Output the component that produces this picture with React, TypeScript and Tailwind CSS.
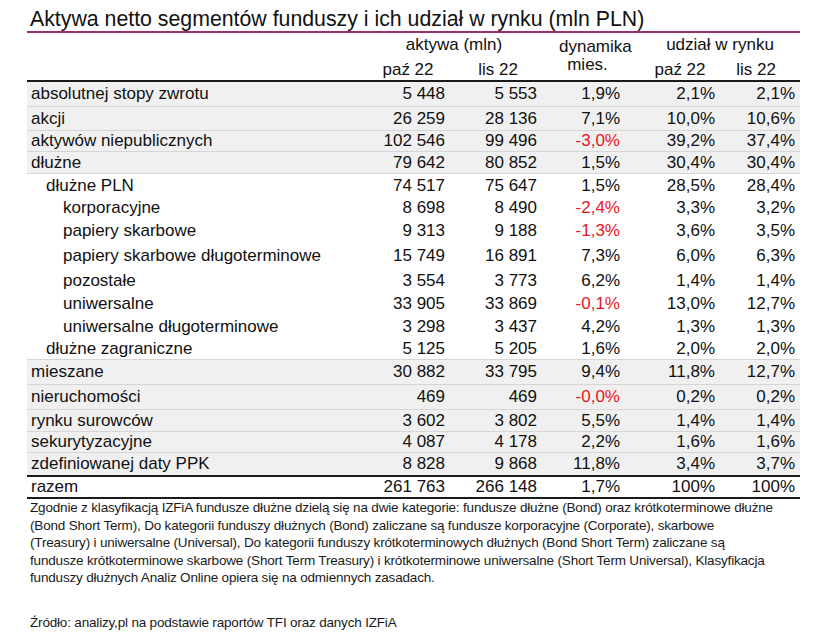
import React from "react";

type Row = {
  l: string;
  a: string;
  b: string;
  d: string;
  u1: string;
  u2: string;
  h: string;
  gray?: boolean;
  ind?: 0 | 1 | 2;
  red?: boolean;
  sep?: boolean;
};

const rows: Row[] = [
  { l: "absolutnej stopy zwrotu", a: "5 448", b: "5 553", d: "1,9%", u1: "2,1%", u2: "2,1%", h: "h-[25px]", gray: true, sep: true },
  { l: "akcji", a: "26 259", b: "28 136", d: "7,1%", u1: "10,0%", u2: "10,6%", h: "h-[24px]", gray: true, sep: true },
  { l: "aktywów niepublicznych", a: "102 546", b: "99 496", d: "-3,0%", u1: "39,2%", u2: "37,4%", h: "h-[21px]", gray: true, red: true, sep: true },
  { l: "dłużne", a: "79 642", b: "80 852", d: "1,5%", u1: "30,4%", u2: "30,4%", h: "h-[22px]", gray: true, sep: true },
  { l: "dłużne PLN", a: "74 517", b: "75 647", d: "1,5%", u1: "28,5%", u2: "28,4%", h: "h-[23px]", ind: 1 },
  { l: "korporacyjne", a: "8 698", b: "8 490", d: "-2,4%", u1: "3,3%", u2: "3,2%", h: "h-[22px]", ind: 2, red: true },
  { l: "papiery skarbowe", a: "9 313", b: "9 188", d: "-1,3%", u1: "3,6%", u2: "3,5%", h: "h-[23px]", ind: 2, red: true },
  { l: "papiery skarbowe długoterminowe", a: "15 749", b: "16 891", d: "7,3%", u1: "6,0%", u2: "6,3%", h: "h-[27px]", ind: 2 },
  { l: "pozostałe", a: "3 554", b: "3 773", d: "6,2%", u1: "1,4%", u2: "1,4%", h: "h-[23px]", ind: 2 },
  { l: "uniwersalne", a: "33 905", b: "33 869", d: "-0,1%", u1: "13,0%", u2: "12,7%", h: "h-[23px]", ind: 2, red: true },
  { l: "uniwersalne długoterminowe", a: "3 298", b: "3 437", d: "4,2%", u1: "1,3%", u2: "1,3%", h: "h-[23px]", ind: 2 },
  { l: "dłużne zagraniczne", a: "5 125", b: "5 205", d: "1,6%", u1: "2,0%", u2: "2,0%", h: "h-[22px]", ind: 1, sep: true },
  { l: "mieszane", a: "30 882", b: "33 795", d: "9,4%", u1: "11,8%", u2: "12,7%", h: "h-[25px]", gray: true, sep: true },
  { l: "nieruchomości", a: "469", b: "469", d: "-0,0%", u1: "0,2%", u2: "0,2%", h: "h-[25px]", gray: true, red: true, sep: true },
  { l: "rynku surowców", a: "3 602", b: "3 802", d: "5,5%", u1: "1,4%", u2: "1,4%", h: "h-[22px]", gray: true, sep: true },
  { l: "sekurytyzacyjne", a: "4 087", b: "4 178", d: "2,2%", u1: "1,6%", u2: "1,6%", h: "h-[21px]", gray: true, sep: true },
  { l: "zdefiniowanej daty PPK", a: "8 828", b: "9 868", d: "11,8%", u1: "3,4%", u2: "3,7%", h: "h-[22px]", gray: true },
];

function DataRow({ r }: { r: Row }) {
  const pl = r.ind === 2 ? "pl-[36px]" : r.ind === 1 ? "pl-[19px]" : "pl-[4px]";
  return (
    <div
      className={`flex items-center ${r.h} ${r.gray ? "bg-[#f0f0f0]" : "bg-white"} ${
        r.sep ? "border-b border-[#d6d6d6]" : ""
      }`}
    >
      <div className={`w-[348px] ${pl}`}>{r.l}</div>
      <div className="w-[75px] pr-[5px] text-right">{r.a}</div>
      <div className="w-[92px] pr-[5px] text-right">{r.b}</div>
      <div className={`w-[83px] pr-[5px] text-right ${r.red ? "text-[#e8151d]" : ""}`}>{r.d}</div>
      <div className="w-[95px] pr-[5px] text-right">{r.u1}</div>
      <div className="w-[80px] pr-[5px] text-right">{r.u2}</div>
    </div>
  );
}

export default function App() {
  return (
    <div className="w-[827px] h-[643px] bg-white text-[#111] font-['Liberation_Sans',Arial,sans-serif] overflow-hidden">
      <div className="ml-[27px] w-[773px]">
        {/* Title */}
        <div className="pt-[7px] pl-[3px] h-[33px] border-b-2 border-[#9c2f6b] text-[21.3px] leading-[24px] whitespace-nowrap">
          Aktywa netto segmentów funduszy i ich udział w rynku (mln PLN)
        </div>

        {/* Header */}
        <div className="flex h-[47px] text-[17px] leading-[17px] whitespace-nowrap">
          <div className="w-[348px]" />
          <div className="w-[167px] flex flex-col">
            <div className="h-[22px] flex items-center justify-center pr-[9px] pt-[1px]">aktywa (mln)</div>
            <div className="h-[25px] flex pt-[4px] items-center">
              <div className="w-[75px] pr-[9px] text-center">paź 22</div>
              <div className="w-[92px] pl-[4px] text-center">lis 22</div>
            </div>
          </div>
          <div className="w-[83px] flex flex-col pt-[5px] leading-[18px]">
            <div className="pl-[17px] text-center">dynamika</div>
            <div className="pl-[8px] text-center">mies.</div>
          </div>
          <div className="w-[175px] flex flex-col">
            <div className="h-[22px] flex items-center justify-center pl-[15px] pt-[1px]">udział w rynku</div>
            <div className="h-[25px] flex pt-[4px] items-center">
              <div className="w-[95px] pl-[15px] text-center">paź 22</div>
              <div className="w-[80px] pr-[8px] text-center">lis 22</div>
            </div>
          </div>
        </div>
        <div className="h-[2px] bg-[#1a1a1a]" />

        {/* Body */}
        <div className="text-[17px] leading-[18px] whitespace-nowrap">
          {rows.map((r, i) => (
            <DataRow key={i} r={r} />
          ))}
          <div className="h-[2px] bg-[#1a1a1a]" />
          <DataRow r={{ l: "razem", a: "261 763", b: "266 148", d: "1,7%", u1: "100%", u2: "100%", h: "h-[20px]" }} />
          <div className="h-[2px] bg-[#1a1a1a]" />
        </div>

        {/* Footnote */}
        <div className="pl-[3px] text-[13.5px] leading-[17.5px] text-[#1a1a1a] tracking-[-0.18px] whitespace-nowrap">
          <div>Zgodnie z klasyfikacją IZFiA fundusze dłużne dzielą się na dwie kategorie: fundusze dłużne (Bond) oraz krótkoterminowe dłużne</div>
          <div>(Bond Short Term), Do kategorii funduszy dłużnych (Bond) zaliczane są fundusze korporacyjne (Corporate), skarbowe</div>
          <div>(Treasury) i uniwersalne (Universal), Do kategorii funduszy krótkoterminowych dłużnych (Bond Short Term) zaliczane są</div>
          <div>fundusze krótkoterminowe skarbowe (Short Term Treasury) i krótkoterminowe uniwersalne (Short Term Universal), Klasyfikacja</div>
          <div>funduszy dłużnych Analiz Online opiera się na odmiennych zasadach.</div>
          <div className="mt-[27px]">Źródło: analizy,pl na podstawie raportów TFI oraz danych IZFiA</div>
        </div>
      </div>
    </div>
  );
}
